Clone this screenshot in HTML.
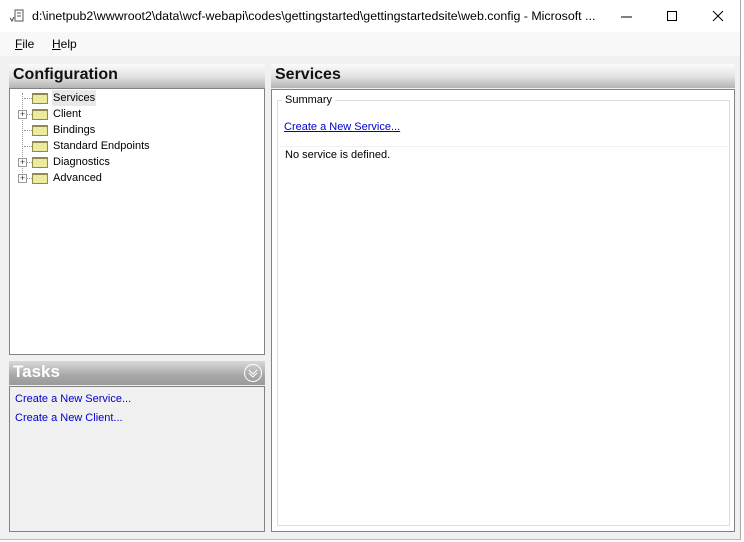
<!DOCTYPE html>
<html><head><style>
*{margin:0;padding:0;box-sizing:border-box}
body{width:744px;height:542px;background:#fff;font-family:"Liberation Sans",Arial,sans-serif;font-size:12px;position:relative;overflow:hidden}
.win{position:absolute;left:0;top:0;width:741px;height:540px;background:#f0f0f0;border-right:1px solid #aaa;border-bottom:1px solid #bbb}
.title{position:absolute;left:0;top:0;width:740px;height:32px;background:#fff}
.title .t{position:absolute;left:32px;top:9px;font-size:12.4px;color:#000;white-space:nowrap}
.menu{position:absolute;left:0;top:32px;width:740px;height:24px;background:#f8f8f8;font-size:12px}
.menu span{position:absolute;top:5px}
.hdr{position:absolute;height:24px;background:linear-gradient(#fafafa,#e4e4e4 50%,#b4b4b4);font-weight:bold;font-size:16px;padding:2px 4px;color:#111}
.box{position:absolute;border:1px solid #828282;background:#fff}
.row{position:absolute;left:43px;height:16px;font-size:11px;line-height:16px}
.fold{position:absolute;left:22px;width:16px;height:11px;background:#ecea9c;border:1px solid #8c8a50;top:3px;border-top:2px solid #8c8a50}
.plus{position:absolute;left:8px;top:4px;width:9px;height:9px;border:1px solid #999;background:#fff;font-size:9px;line-height:7px;text-align:center;color:#333}
.dots{position:absolute;border-top:1px dotted #999;top:8px;left:14px;width:8px}
a{color:#00c;text-decoration:none;font-size:11px;white-space:nowrap}
</style></head><body>
<div class="win">
<div class="title"><svg style="position:absolute;left:9px;top:9px" width="16" height="14"><rect x="6" y="1" width="8" height="11" fill="#fff" stroke="#555"/><line x1="8" y1="4" x2="12" y2="4" stroke="#555"/><line x1="8" y1="7" x2="12" y2="7" stroke="#555"/><path d="M1 9 L3 12 L5 8" stroke="#444" fill="none"/></svg>
<span class="t">d:\inetpub2\wwwroot2\data\wcf-webapi\codes\gettingstarted\gettingstartedsite\web.config - Microsoft ...</span>
<svg style="position:absolute;left:620px;top:10px" width="110" height="14"><line x1="1" y1="7" x2="12" y2="7" stroke="#000"/><rect x="47.5" y="1.5" width="9" height="9" fill="none" stroke="#000"/><path d="M93 1 L103 11 M103 1 L93 11" stroke="#000"/></svg>
</div>
<div class="menu"><span style="left:15px"><u>F</u>ile</span><span style="left:52px"><u>H</u>elp</span></div>
<div class="hdr" style="left:9px;top:64px;width:256px">Configuration</div>
<div class="box" style="left:9px;top:88px;width:256px;height:267px">
 <div style="position:absolute;left:12px;top:4px;height:88px;border-left:1px dotted #999"></div>
 <div class="row" style="top:1px;left:0;width:250px"><div class="dots"></div><div class="fold"></div><span style="position:absolute;left:42px;background:#e8e8e8;padding:0 1px">Services</span></div>
 <div class="row" style="top:17px;left:0"><div class="dots"></div><div class="plus">+</div><div class="fold"></div><span style="position:absolute;left:43px;white-space:nowrap">Client</span></div>
 <div class="row" style="top:33px;left:0"><div class="dots"></div><div class="fold"></div><span style="position:absolute;left:43px;white-space:nowrap">Bindings</span></div>
 <div class="row" style="top:49px;left:0"><div class="dots"></div><div class="fold"></div><span style="position:absolute;left:43px;white-space:nowrap">Standard Endpoints</span></div>
 <div class="row" style="top:65px;left:0"><div class="dots"></div><div class="plus">+</div><div class="fold"></div><span style="position:absolute;left:43px;white-space:nowrap">Diagnostics</span></div>
 <div class="row" style="top:81px;left:0"><div class="dots"></div><div class="plus">+</div><div class="fold"></div><span style="position:absolute;left:43px;white-space:nowrap">Advanced</span></div>
</div>
<div class="hdr" style="left:9px;top:361px;width:256px;color:#fff;font-size:17px;padding-top:1px;background:linear-gradient(#d8d8d8,#a8a8a8 60%,#9a9a9a)">Tasks
<svg style="position:absolute;right:2px;top:2px" width="20" height="20"><circle cx="10" cy="10" r="8.5" fill="none" stroke="#fff"/><path d="M6 7 L10 11 L14 7 M6 10 L10 14 L14 10" stroke="#fff" fill="none"/></svg></div>
<div class="box" style="left:9px;top:386px;width:256px;height:146px;background:#f0f0f0">
 <div style="position:absolute;left:5px;top:4px"><a>Create a New Service...</a></div>
 <div style="position:absolute;left:5px;top:23px"><a>Create a New Client...</a></div>
</div>
<div class="hdr" style="left:271px;top:64px;width:464px">Services</div>
<div class="box" style="left:271px;top:89px;width:464px;height:443px">
 <div style="position:absolute;left:5px;top:10px;width:453px;height:426px;border:1px solid #ddd">
  <span style="position:absolute;left:4px;top:-7px;background:#fff;padding:0 3px;font-size:11px">Summary</span>
  <a style="position:absolute;left:6px;top:20px;text-decoration:underline">Create a New Service...</a>
  <div style="position:absolute;left:1px;top:45px;width:448px;border-top:1px solid #f0f0f0"></div>
  <span style="position:absolute;left:7px;top:48px;font-size:11px">No service is defined.</span>
 </div>
</div>
</div>
</body></html>
